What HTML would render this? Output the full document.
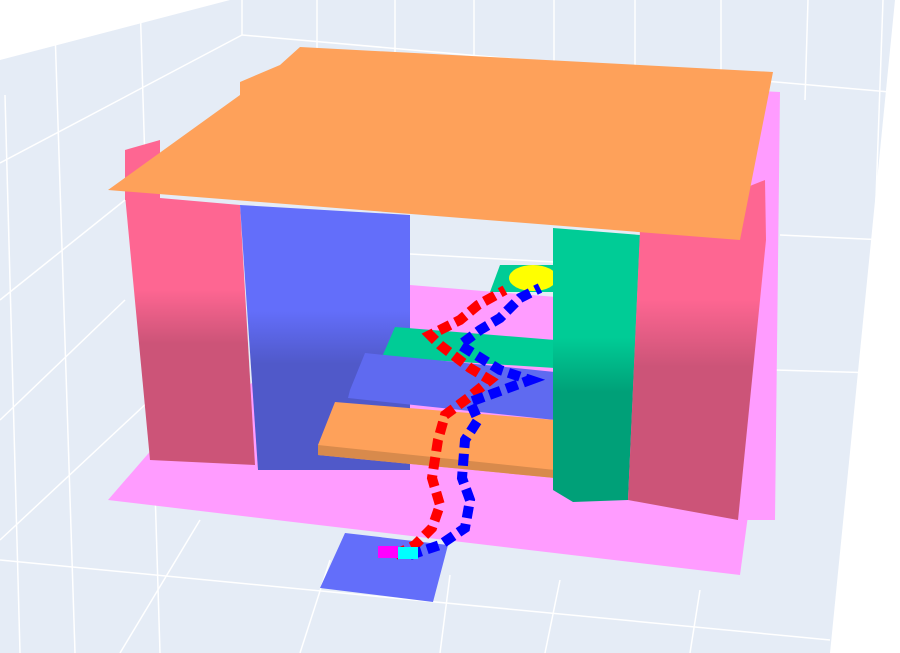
<!DOCTYPE html>
<html><head><meta charset="utf-8"><style>html,body{margin:0;padding:0;background:#fff;width:900px;height:653px;overflow:hidden}</style></head><body>
<svg width="900" height="653" viewBox="0 0 900 653" xmlns="http://www.w3.org/2000/svg">
<defs>
<linearGradient id="pk" x1="0" y1="0" x2="0" y2="1"><stop offset="0" stop-color="#fe6692"/><stop offset="0.35" stop-color="#fe6692"/><stop offset="0.55" stop-color="#cc5478"/><stop offset="1" stop-color="#cc5478"/></linearGradient>
<linearGradient id="bl" x1="0" y1="0" x2="0" y2="1"><stop offset="0" stop-color="#636efa"/><stop offset="0.4" stop-color="#636efa"/><stop offset="0.6" stop-color="#5059c9"/><stop offset="1" stop-color="#5059c9"/></linearGradient>
<linearGradient id="gr" x1="0" y1="0" x2="0" y2="1"><stop offset="0" stop-color="#00cc96"/><stop offset="0.4" stop-color="#00cc96"/><stop offset="0.6" stop-color="#00a078"/><stop offset="1" stop-color="#00a078"/></linearGradient>
</defs>
<polygon points="0,60 230,0 895,0 830,653 0,653" fill="#e5ecf6"/>
<g stroke="#fff" stroke-width="1.5" fill="none">
<line x1="242" y1="35" x2="242" y2="0"/><line x1="242" y1="35" x2="0" y2="163"/>
<line x1="242" y1="35" x2="890" y2="92"/>
<line x1="317" y1="0" x2="317" y2="60"/><line x1="395" y1="0" x2="395" y2="70"/>
<line x1="474" y1="0" x2="474" y2="75"/><line x1="554" y1="0" x2="554" y2="80"/>
<line x1="635" y1="0" x2="635" y2="85"/><line x1="721" y1="0" x2="721" y2="90"/>
<line x1="808" y1="0" x2="805" y2="100"/><line x1="883" y1="0" x2="860" y2="653"/>
<line x1="780" y1="235" x2="885" y2="240"/><line x1="775" y1="370" x2="878" y2="373"/>
<line x1="560" y1="240" x2="640" y2="240"/>
<line x1="410" y1="254" x2="555" y2="262"/>
<line x1="140" y1="0" x2="160" y2="653"/><line x1="55" y1="30" x2="75" y2="653"/>
<line x1="5" y1="95" x2="20" y2="653"/>
<line x1="0" y1="300" x2="125" y2="200"/><line x1="0" y1="420" x2="125" y2="300"/>
<line x1="0" y1="540" x2="150" y2="400"/>
<line x1="0" y1="560" x2="830" y2="640"/><line x1="200" y1="520" x2="120" y2="653"/>
<line x1="330" y1="560" x2="300" y2="653"/><line x1="560" y1="580" x2="545" y2="653"/>
<line x1="700" y1="590" x2="690" y2="653"/><line x1="450" y1="575" x2="440" y2="653"/>
</g>
<polygon points="108,500 160,440 410,285 775,315 740,575" fill="#ff9cff"/>
<polygon points="740,90 780,92 775,520 740,520" fill="#ff9cff"/>
<polygon points="320,588 345,533 448,545 433,602" fill="#636efa"/>
<polygon points="125,150 160,140 160,200 125,200" fill="#fe6692"/>
<polygon points="125,195 240,205 255,465 150,460" fill="url(#pk)"/>
<polygon points="240,205 410,215 410,470 258,470" fill="url(#bl)"/>
<polygon points="500,265 555,265 555,292 490,292" fill="#00cc96"/>
<ellipse cx="533" cy="278" rx="24" ry="13" fill="#ffff00"/>
<polygon points="395,327 555,340 555,368 382,357" fill="#00cc96"/>
<polygon points="365,353 555,372 555,420 348,398 350,390" fill="#5f6af0"/>
<polygon points="335,402 555,420 555,478 318,455 318,445" fill="#fea15a"/>
<polygon points="318,445 555,470 555,478 318,455" fill="#d88a4c"/>
<g fill="none" stroke-width="10" stroke-dasharray="12,6">
<polyline stroke="#ff0000" points="395,555 415,545 432,528 440,505 432,478 438,440 445,415 468,398 490,380 470,368 440,345 430,335 460,320 478,305 505,290"/>
<polyline stroke="#0000ff" points="410,555 440,545 465,528 470,500 462,478 465,440 478,420 470,402 530,380 500,370 460,345 480,330 500,318 520,298 540,288"/>
</g>
<rect x="378" y="546" width="20" height="12" fill="#ff00ff"/>
<rect x="398" y="547" width="20" height="12" fill="#00ffff"/>
<polygon points="553,228 640,235 628,500 573,502 553,490" fill="url(#gr)"/>
<polygon points="640,230 765,180 766,240 738,520 628,500" fill="url(#pk)"/>
<polygon points="108,190 240,95 240,82 280,65 300,47 773,72 740,240" fill="#fea15a"/>
</svg>
</body></html>
